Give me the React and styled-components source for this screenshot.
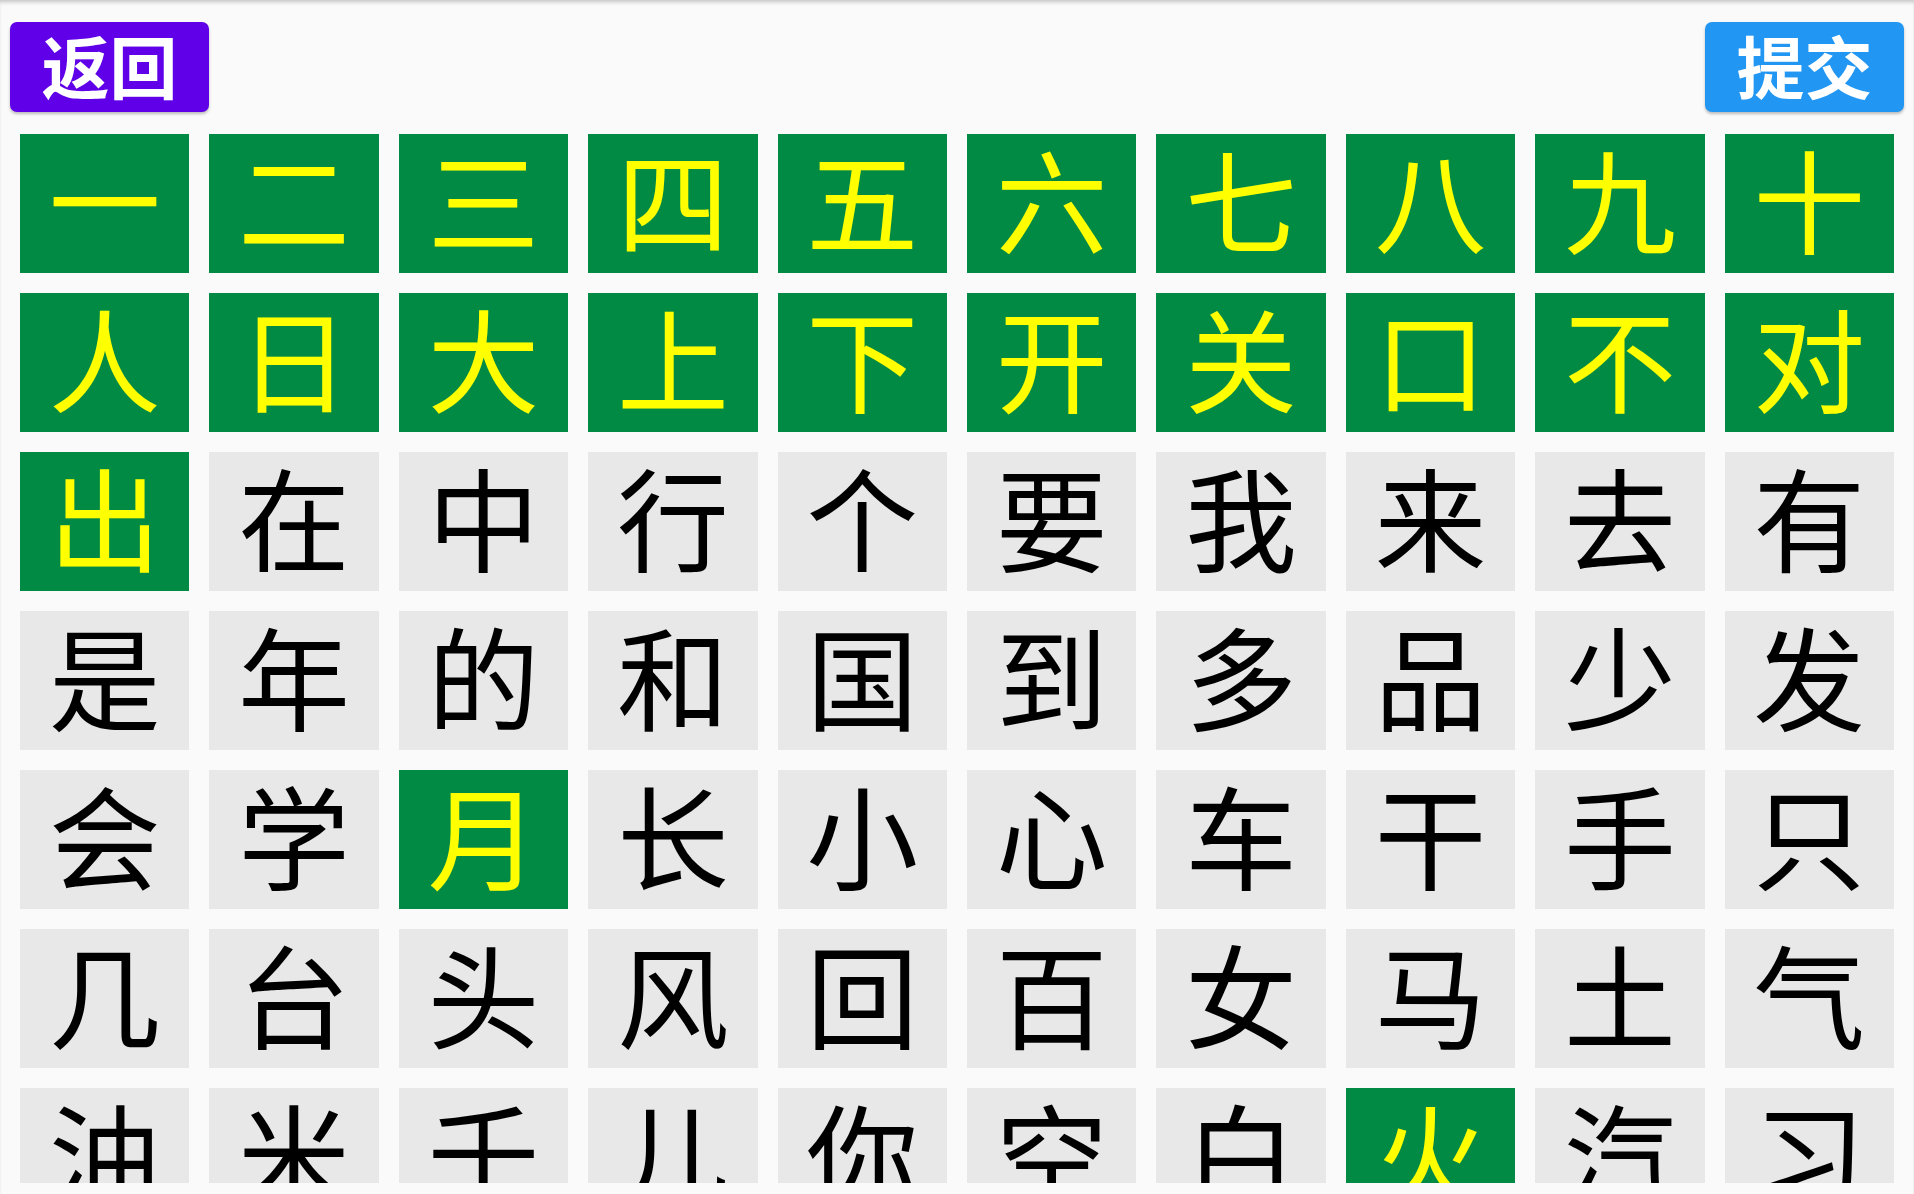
import styled, { createGlobalStyle } from "styled-components";

const GlobalStyle = createGlobalStyle`
  html, body { margin: 0; padding: 0; background: #fafafa; }
  body { font-family: "Noto Sans CJK SC", "Noto Sans", sans-serif; }
`;

const rows = [
  "一二三四五六七八九十",
  "人日大上下开关口不对",
  "出在中行个要我来去有",
  "是年的和国到多品少发",
  "会学月长小心车干手只",
  "几台头风回百女马土气",
  "油米千儿你空白火汽习",
];

// characters already learned
const learned = new Set([..."一二三四五六七八九十人日大上下开关口不对出月火"]);

const Page = styled.div`
  width: 1914px;
  height: 1194px;
  background: #fafafa;
  display: flex;
  flex-direction: column;
  overflow: hidden;
  box-shadow: inset 0 4px 4px -2px rgba(0, 0, 0, 0.22);
`;

const Toolbar = styled.div`
  display: flex;
  justify-content: space-between;
  align-items: center;
  padding: 22px 10px 0 10px;
  height: 90px;
`;

const Button = styled.button`
  width: 199px;
  height: 90px;
  border: none;
  border-radius: 7px;
  background: ${(p) => p.$color};
  color: #fff;
  font-family: "Noto Sans CJK SC", sans-serif;
  font-weight: 700;
  font-size: 68px;
  line-height: 1;
  padding: 0 0 4px 0;
  display: flex;
  align-items: center;
  justify-content: center;
  box-shadow: 0 2px 3px rgba(0, 0, 0, 0.25);
  cursor: pointer;
`;

const Grid = styled.div`
  margin-top: 22px;
  padding: 0 20px;
  height: 1049px;
  overflow: hidden;
  display: grid;
  grid-template-columns: repeat(10, 1fr);
  grid-auto-rows: 139px;
  gap: 20px;
`;

const Cell = styled.div`
  background: ${(p) => (p.$done ? "#008a44" : "#e8e8e8")};
  color: ${(p) => (p.$done ? "#ffff00" : "#000")};
  display: flex;
  align-items: center;
  justify-content: center;
  padding-bottom: 14px;
  box-sizing: border-box;
  font-family: "Noto Sans CJK SC", sans-serif;
  font-size: 112px;
  line-height: 1;
  user-select: none;
`;

export default function App() {
  return (
    <>
      <GlobalStyle />
      <Page>
        <Toolbar>
          <Button $color="#5f00e8">返回</Button>
          <Button $color="#2196f3">提交</Button>
        </Toolbar>
        <Grid>
          {rows.map((row) =>
            [...row].map((ch) => (
              <Cell key={ch} $done={learned.has(ch)}>
                {ch}
              </Cell>
            ))
          )}
        </Grid>
      </Page>
    </>
  );
}
